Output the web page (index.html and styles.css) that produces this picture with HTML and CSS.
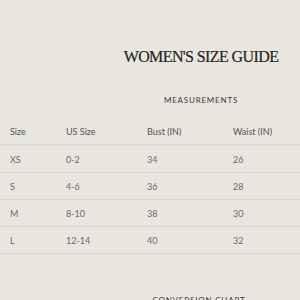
FILE: index.html
```html
<!DOCTYPE html>
<html>
<head>
<meta charset="utf-8">
<link rel="stylesheet" href="styles.css">
</head>
<body>
<div class="page">
  <header class="head">
    <h1 class="title">WOMEN'S SIZE GUIDE</h1>
    <h2 class="sub">MEASUREMENTS</h2>
  </header>
  <div class="table">
    <div class="row hdr"><span>Size</span><span>US Size</span><span>Bust (IN)</span><span>Waist (IN)</span></div>
    <div class="row"><span>XS</span><span>0-2</span><span>34</span><span>26</span></div>
    <div class="row"><span>S</span><span>4-6</span><span>36</span><span>28</span></div>
    <div class="row"><span>M</span><span>8-10</span><span>38</span><span>30</span></div>
    <div class="row"><span>L</span><span>12-14</span><span>40</span><span>32</span></div>
  </div>
  <h2 class="sub conv">CONVERSION CHART</h2>
</div>
</body>
</html>
```
FILE: styles.css
```css
html, body { margin: 0; padding: 0; }
body { background: #e9e6e0; width: 300px; height: 300px; overflow: hidden; }
.page { display: flex; flex-direction: column; }
.head { display: flex; flex-direction: column; align-items: center; padding-left: 102px; padding-top: 48px; }
.title { margin: 0; font-family: "Liberation Serif", serif; font-weight: normal; font-size: 16px; line-height: 18px; letter-spacing: -0.6px; color: #262420; -webkit-text-stroke: 0.2px #262420; }
.sub { margin: 0; font-family: "Lato", sans-serif; font-weight: normal; font-size: 8px; letter-spacing: 0.8px; color: #3a3835; }
.head .sub { margin-top: 29px; line-height: 10px; }
.table { margin-top: 13px; display: flex; flex-direction: column; }
.row { display: grid; grid-template-columns: 56px 81px 86px 1fr; padding-left: 10px; height: 26px; align-items: center; border-bottom: 1px solid #d8d4ce; font-family: "Lato", sans-serif; font-size: 9px; color: #6b6966; }
.row.hdr { border-bottom: 2px solid #dcd8d2; height: 26px; color: #55534f; }
.conv { margin-top: 41px; padding-left: 98px; text-align: center; }
```
